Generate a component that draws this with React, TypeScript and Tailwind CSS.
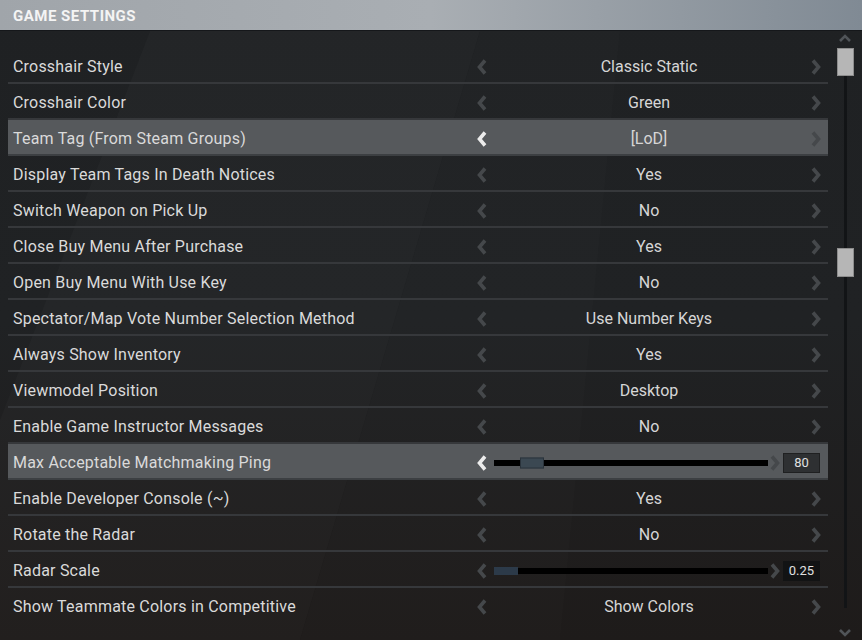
import React from 'react';

type Row = {
  label: string;
  value?: string;
  slider?: { pos: number; text: string; dim?: boolean };
  active?: boolean;
};

const rows: Row[] = [
  { label: 'Crosshair Style', value: 'Classic Static' },
  { label: 'Crosshair Color', value: 'Green' },
  { label: 'Team Tag (From Steam Groups)', value: '[LoD]', active: true },
  { label: 'Display Team Tags In Death Notices', value: 'Yes' },
  { label: 'Switch Weapon on Pick Up', value: 'No' },
  { label: 'Close Buy Menu After Purchase', value: 'Yes' },
  { label: 'Open Buy Menu With Use Key', value: 'No' },
  { label: 'Spectator/Map Vote Number Selection Method', value: 'Use Number Keys' },
  { label: 'Always Show Inventory', value: 'Yes' },
  { label: 'Viewmodel Position', value: 'Desktop' },
  { label: 'Enable Game Instructor Messages', value: 'No' },
  { label: 'Max Acceptable Matchmaking Ping', slider: { pos: 26, text: '80' }, active: true },
  { label: 'Enable Developer Console (~)', value: 'Yes' },
  { label: 'Rotate the Radar', value: 'No' },
  { label: 'Radar Scale', slider: { pos: 0, text: '0.25', dim: true } },
  { label: 'Show Teammate Colors in Competitive', value: 'Show Colors' },
];

function Chevron({ dir, bright }: { dir: 'left' | 'right'; bright?: boolean }) {
  return (
    <svg width="12" height="18" viewBox="0 0 12 18" className={bright ? 'text-[#ececec]' : 'text-[#45484b]'}>
      <path
        d={dir === 'left' ? 'M9 2.5 L3.5 9 L9 15.5' : 'M3 2.5 L8.5 9 L3 15.5'}
        fill="none"
        stroke="currentColor"
        strokeWidth="3.6"
        strokeLinejoin="miter"
      />
    </svg>
  );
}

function SettingRow({ row, last }: { row: Row; last: boolean }) {
  return (
    <div
      className={`flex items-center h-[36px] pt-[3px] border-b-2 ${
        last ? 'border-transparent' : row.active ? 'bg-[#56595c] border-[#3c3f42]' : 'border-[#36383b]'
      }`}
    >
      <div className="flex-1 pl-[5px] text-[16px] text-[#dadada] tracking-[0.2px]">{row.label}</div>
      {row.slider ? (
        <div className="w-[352px] flex items-center pr-[8px]">
          <div className="w-[12px] flex justify-center">
            <Chevron dir="left" bright={!row.slider.dim} />
          </div>
          <div className="relative ml-[6px] w-[274px] h-[6px] bg-black">
            <div
              className={`absolute top-1/2 -translate-y-1/2 w-[24px] ${
                row.slider.dim ? 'h-[8px] bg-[#2c3a49]' : 'h-[11px] bg-[#3b4852] border border-[#2a333b]'
              }`}
              style={{ left: `${row.slider.pos}px` }}
            />
          </div>
          <div className="w-[14px] flex justify-center">
            <Chevron dir="right" />
          </div>
          <div
            className={`ml-auto w-[37px] h-[20px] flex items-center justify-center text-[13px] text-[#e0e0e0] ${
              row.slider.dim ? 'bg-[#121314]' : 'bg-[#2e3032] border border-[#1f2021]'
            }`}
          >
            {row.slider.text}
          </div>
        </div>
      ) : (
        <div className="w-[352px] flex items-center pr-[6px]">
          <div className="w-[12px] flex justify-center">
            <Chevron dir="left" bright={row.active} />
          </div>
          <div className="flex-1 text-center text-[16px] text-[#d6d6d6]">{row.value}</div>
          <div className="w-[12px] flex justify-center">
            <Chevron dir="right" />
          </div>
        </div>
      )}
    </div>
  );
}

export default function App() {
  return (
    <div
      className="w-[862px] h-[640px] overflow-hidden relative flex flex-col bg-gradient-to-b from-[#1f2123] via-[#202224] to-[#1e1b1a]"
      style={{ fontFamily: 'Roboto, "DejaVu Sans", sans-serif' }}
    >
      <svg className="absolute inset-0 pointer-events-none" width="862" height="640">
        <polygon points="150,31 480,31 300,640 0,640 0,420" fill="#ffffff" opacity="0.018" />
        <polygon points="480,31 620,31 560,640 300,640" fill="#ffffff" opacity="0.012" />
      </svg>

      <div className="relative h-[31px] shrink-0 flex items-center px-[13px] bg-gradient-to-r from-[#a0a5aa] via-[#a9aeb3] to-[#808a94] border-b border-[#15171a]">
        <span className="text-[15px] font-bold tracking-[0.5px] text-[#f4f4f4] pt-[2px]">GAME SETTINGS</span>
      </div>

      <div className="relative flex flex-1">
        <div className="w-[828px] pl-[8px] pt-[17px]">
          {rows.map((r, i) => (
            <SettingRow key={r.label} row={r} last={i === rows.length - 1} />
          ))}
        </div>

        <div className="flex-1 flex flex-col items-center pt-[2px]">
          <svg width="14" height="9" viewBox="0 0 14 9" className="text-[#505458] mt-[1px]">
            <path d="M2 7 L7 2 L12 7" fill="none" stroke="currentColor" strokeWidth="2.6" />
          </svg>
          <div className="relative flex-1 w-[17px] mt-[5px] flex flex-col items-center">
            <div className="absolute top-0 bottom-[20px] w-[3px] bg-[#121416]" />
            <div className="relative w-[17px] h-[28px] bg-[#b6b6b6] border border-[#8d8d8d]" />
            <div className="relative w-[17px] h-[29px] bg-[#b6b6b6] border border-[#8d8d8d] mt-[172px]" />
          </div>
          <svg width="14" height="9" viewBox="0 0 14 9" className="text-[#505458] mb-[3px]">
            <path d="M2 2 L7 7 L12 2" fill="none" stroke="currentColor" strokeWidth="2.6" />
          </svg>
        </div>
      </div>
    </div>
  );
}
